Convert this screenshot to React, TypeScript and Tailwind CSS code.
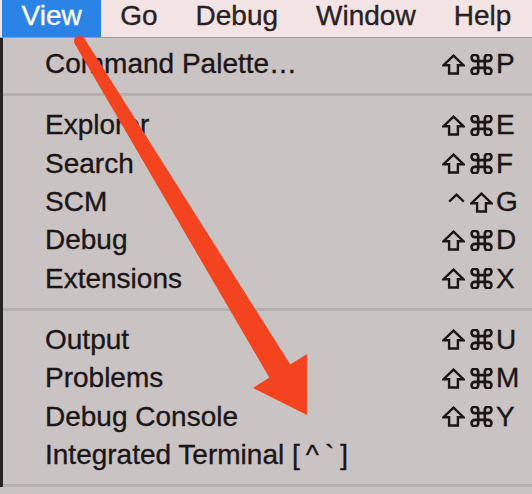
import React from 'react';

type Mod = 'shift' | 'cmd' | 'ctrl';

interface MenuItem {
  label: React.ReactNode;
  mods?: Mod[];
  keyChar?: string;
}

function ShiftGlyph() {
  return (
    <svg width="23" height="21" viewBox="0 0 23 21" fill="none">
      <path
        d="M11.5 1.6 L21.4 11.2 H15.9 V19.5 H7.1 V11.2 H1.6 Z"
        stroke="#1c1617"
        strokeWidth="2.4"
        strokeLinejoin="miter"
      />
    </svg>
  );
}

function CmdGlyph() {
  return (
    <svg width="23" height="21" viewBox="2 2.5 20 19" fill="none">
      <path
        d="M15 6v12a3 3 0 1 0 3-3H6a3 3 0 1 0 3 3V6a3 3 0 1 0-3 3h12a3 3 0 1 0-3-3"
        stroke="#1c1617"
        strokeWidth="2.4"
      />
    </svg>
  );
}

function CtrlGlyph() {
  return (
    <svg width="17" height="10" viewBox="0 0 17 10" fill="none" className="mb-[8px]">
      <path d="M1.2 8.6 L8.5 1.6 L15.8 8.6" stroke="#1c1617" strokeWidth="2.3" />
    </svg>
  );
}

const GROUPS: MenuItem[][] = [
  [{ label: 'Command Palette…', mods: ['shift', 'cmd'], keyChar: 'P' }],
  [
    { label: 'Explorer', mods: ['shift', 'cmd'], keyChar: 'E' },
    { label: 'Search', mods: ['shift', 'cmd'], keyChar: 'F' },
    { label: 'SCM', mods: ['ctrl', 'shift'], keyChar: 'G' },
    { label: 'Debug', mods: ['shift', 'cmd'], keyChar: 'D' },
    { label: 'Extensions', mods: ['shift', 'cmd'], keyChar: 'X' },
  ],
  [
    { label: 'Output', mods: ['shift', 'cmd'], keyChar: 'U' },
    { label: 'Problems', mods: ['shift', 'cmd'], keyChar: 'M' },
    { label: 'Debug Console', mods: ['shift', 'cmd'], keyChar: 'Y' },
    {
      label: (
        <>
          Integrated Terminal <span className="tracking-[6px]">[^`</span>]
        </>
      ),
    },
  ],
];

const MENUBAR = ['View', 'Go', 'Debug', 'Window', 'Help'];

function Row({ item }: { item: MenuItem }) {
  return (
    <div className="flex h-[38.3px] items-center justify-between pl-[42px]">
      <span>{item.label}</span>
      {item.keyChar && (
        <div className="flex items-center">
          <div className="flex items-center gap-[5px]">
            {item.mods?.map((m, i) => (
              <span key={i} className="flex items-center">
                {m === 'shift' ? <ShiftGlyph /> : m === 'cmd' ? <CmdGlyph /> : <CtrlGlyph />}
              </span>
            ))}
          </div>
          <div className="w-[39px] pl-[3px]">{item.keyChar}</div>
        </div>
      )}
    </div>
  );
}

export default function App() {
  return (
    <div className="relative h-[494px] w-[532px] overflow-hidden bg-[#c9c3c4] font-['Liberation_Sans',Arial,sans-serif] text-[28px] text-[#1c1617] [-webkit-text-stroke:0.35px_currentColor]">
      {/* menu bar */}
      <div className="flex h-[38px] border-b border-[#9e9899] bg-[#f2e4e5] pl-[2px] leading-[32px] text-[#2a2122]">
        {MENUBAR.map((m, i) => (
          <div
            key={m}
            className={i === 0 ? 'h-full bg-[#2c83e6] px-[19.5px] text-white' : 'h-full px-[19px]'}
          >
            {m}
          </div>
        ))}
      </div>

      {/* dropdown */}
      <div className="border-l-[3px] border-[#262425] pt-[7px]">
        {GROUPS.map((group, gi) => (
          <div key={gi}>
            {gi > 0 && <div className="my-[10px] h-[3px] bg-[#b5afb0]" />}
            {group.map((item, ii) => (
              <Row key={ii} item={item} />
            ))}
          </div>
        ))}
        <div className="my-[10px] h-[3px] bg-[#b5afb0]" />
      </div>

      {/* red annotation arrow */}
      <svg className="pointer-events-none absolute inset-0" width="532" height="494" viewBox="0 0 532 494">
        <circle cx="79.5" cy="41" r="5.5" fill="#f4441f" />
        <polygon points="84.2,38.1 294.9,371.8 273.5,384.8 74.8,43.9" fill="#f4441f" />
        <polygon points="253,388 307,354 307,415" fill="#f4441f" />
      </svg>
    </div>
  );
}
